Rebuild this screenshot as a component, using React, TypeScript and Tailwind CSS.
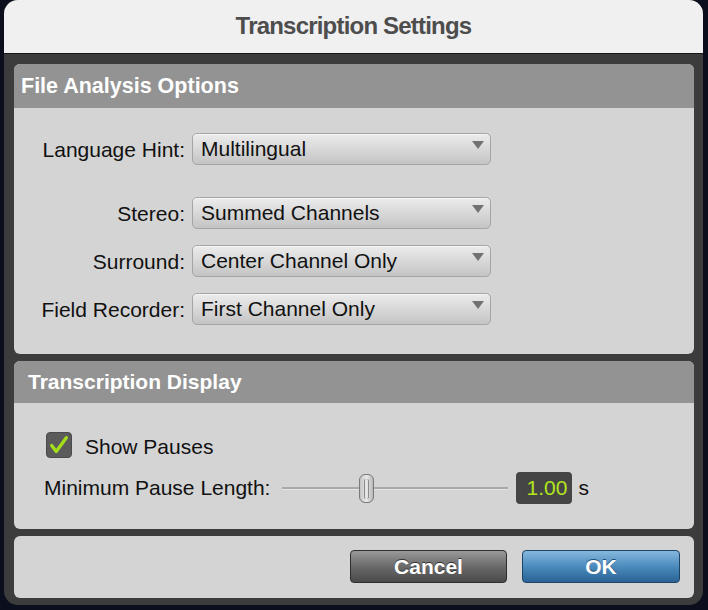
const font = { fontFamily: '"Liberation Sans", Arial, sans-serif' };

function Dropdown({ value }: { value: string }) {
  return (
    <div className="relative w-[299px] h-[32px] rounded-[5px] border border-[#a5a5a5] bg-linear-to-b from-[#ececec] via-[#d8d8d8] to-[#c4c4c4] shadow-[inset_0_1px_0_#f6f6f6] flex items-center pl-[8px] text-[21px] text-[#111]">
      {value}
      <div className="absolute right-[6px] top-[7px] w-0 h-0 border-l-[6px] border-r-[6px] border-t-[8px] border-l-transparent border-r-transparent border-t-[#727272]" />
    </div>
  );
}

function Row({ label, value }: { label: string; value: string }) {
  return (
    <div className="flex items-center h-[32px]">
      <div className="w-[171px] text-right text-[21px] text-[#111] pt-[2px]">{label}</div>
      <div className="ml-[7px]">
        <Dropdown value={value} />
      </div>
    </div>
  );
}

export default function App() {
  return (
    <div className="w-[708px] h-[610px] bg-[#0b0f1d] pl-[4px]" style={font}>
      <div className="w-[699px] h-[605px] rounded-[14px] overflow-hidden flex flex-col bg-[#3c3c3c]">
        {/* Title bar */}
        <div className="h-[54px] shrink-0 bg-[#f0f0f0] border-b border-[#161616] flex items-center justify-center pb-[2px]">
          <h1 className="text-[24px] font-bold text-[#4d4d4d] tracking-[-0.8px]">Transcription Settings</h1>
        </div>

        <div className="flex-1 pl-[10px] pr-[9px] pt-[10px] flex flex-col gap-[7px]">
          {/* File Analysis Options */}
          <div className="h-[290px] rounded-[6px] overflow-hidden bg-[#d4d4d4] flex flex-col">
            <div className="h-[44px] shrink-0 bg-[#939393] flex items-center pl-[7px]">
              <span className="text-[21.5px] font-bold text-white">File Analysis Options</span>
            </div>
            <div className="pt-[25px] flex flex-col">
              <Row label="Language Hint:" value="Multilingual" />
              <div className="mt-[32px] flex flex-col gap-[16px]">
                <Row label="Stereo:" value="Summed Channels" />
                <Row label="Surround:" value="Center Channel Only" />
                <Row label="Field Recorder:" value="First Channel Only" />
              </div>
            </div>
          </div>

          {/* Transcription Display */}
          <div className="h-[168px] rounded-[6px] overflow-hidden bg-[#d4d4d4] flex flex-col">
            <div className="h-[42px] shrink-0 bg-[#939393] flex items-center pl-[14px]">
              <span className="text-[21px] font-bold text-white">Transcription Display</span>
            </div>
            <div className="pt-[29px] flex flex-col">
              <div className="flex items-center pl-[32px] h-[26px]">
                <div className="w-[26px] h-[26px] rounded-[4px] bg-[#5b5b5b] border border-[#4a4a4a] flex items-center justify-center">
                  <svg viewBox="0 0 24 24" className="w-[22px] h-[22px]">
                    <path d="M4 12.5l5 6.5L20 4" fill="none" stroke="#a3e01a" strokeWidth="3.6" strokeLinecap="round" strokeLinejoin="round" />
                  </svg>
                </div>
                <span className="ml-[13px] text-[21px] text-[#111] leading-none pt-[2px]">Show Pauses</span>
              </div>
              <div className="mt-[14px] flex items-center pl-[30px] h-[32px]">
                <span className="text-[21px] text-[#111]">Minimum Pause Length:</span>
                <div className="relative ml-[12px] w-[226px] h-[32px] flex items-center">
                  <div className="w-full h-[2px] bg-[#a9a9a9] shadow-[0_1px_0_#e4e4e4]" />
                  <div className="absolute left-[77px] top-[2px] w-[15px] h-[29px] rounded-[6px] border border-[#7a7a7a] bg-linear-to-r from-[#c4c4c4] via-[#e8e8e8] to-[#b8b8b8] flex items-center justify-center">
                    <div className="w-[5px] h-[20px] rounded-[2px] border-x border-[#8a8a8a]" />
                  </div>
                </div>
                <div className="ml-[8px] w-[56px] h-[32px] rounded-[4px] bg-[#454545] flex items-center justify-end pr-[5px] text-[21px] text-[#b3e61c]">
                  1.00
                </div>
                <span className="ml-[6px] text-[21px] text-[#111]">s</span>
              </div>
            </div>
          </div>

          {/* Buttons */}
          <div className="h-[62px] rounded-[6px] bg-[#d4d4d4] flex items-center justify-end pr-[14px] pb-[1px] gap-[15px]">
            <button className="w-[157px] h-[33px] rounded-[4px] border border-[#2e2e2e] bg-linear-to-b from-[#9a9a9a] via-[#6a6a6a] to-[#4a4a4a] text-white font-bold text-[21px] [text-shadow:0_-1px_0_#333]">
              Cancel
            </button>
            <button className="w-[158px] h-[33px] rounded-[4px] border border-[#1c4466] bg-linear-to-b from-[#86b8dd] via-[#4b8bbd] to-[#2b6394] text-white font-bold text-[21px] [text-shadow:0_-1px_0_#1d4a70]">
              OK
            </button>
          </div>
        </div>
      </div>
    </div>
  );
}
